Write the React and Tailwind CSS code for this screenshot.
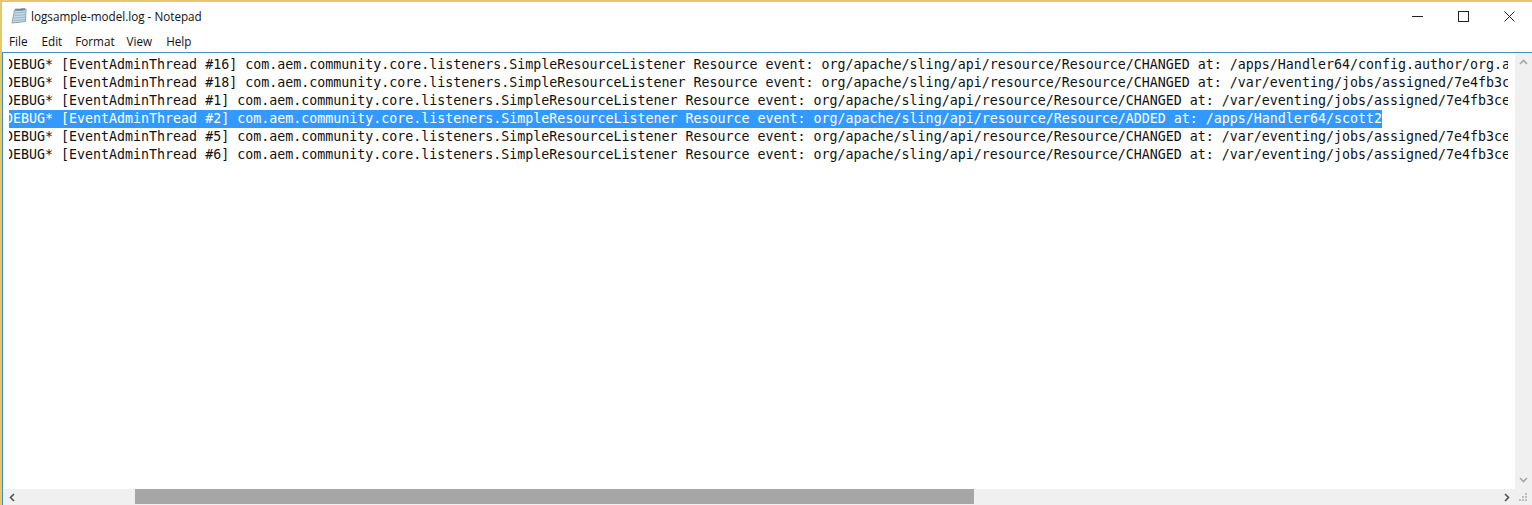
const prefix = "com.aem.community.core.listeners.SimpleResourceListener Resource event: org/apache/sling/api/resource/Resource/";

const lines = [
  { thread: "#16", rest: "CHANGED at: /apps/Handler64/config.author/org.apache.sling.commons.log" },
  { thread: "#18", rest: "CHANGED at: /var/eventing/jobs/assigned/7e4fb3ce-8c1f-4a3e" },
  { thread: "#1", rest: "CHANGED at: /var/eventing/jobs/assigned/7e4fb3ce-8c1f-4a3e" },
  { thread: "#2", rest: "ADDED at: /apps/Handler64/scott2", selected: true },
  { thread: "#5", rest: "CHANGED at: /var/eventing/jobs/assigned/7e4fb3ce-8c1f-4a3e" },
  { thread: "#6", rest: "CHANGED at: /var/eventing/jobs/assigned/7e4fb3ce-8c1f-4a3e" },
];

const NotepadIcon = () => (
  <svg width="16" height="16" viewBox="0 0 16 16" className="shrink-0">
    <path d="M3.5 2 L15 1 L14.5 13.5 L1 15 Z" fill="#c4dcea" stroke="#8aa3b3" />
    <path d="M4 5 L14 4.2 M3.5 7.5 L14 6.7 M3 10 L14 9.2 M2.5 12.5 L14 11.7" stroke="#9db4c2" />
    <path d="M5 0.5 V3 M7 0.5 V3 M9 0.5 V3 M11 0 V3 M13 0 V2.5" stroke="#4f5f68" />
  </svg>
);

const App = () => {
  return (
    <div className="h-[505px] w-[1532px] flex flex-col overflow-hidden bg-white border-t-2 border-l-2 border-[#e6c868] font-['Segoe_UI','Open_Sans',sans-serif] text-black">
      {/* Title bar */}
      <div className="h-[28px] flex items-center shrink-0 pl-[9px]">
        <NotepadIcon />
        <span className="ml-[4px] mt-[2px] text-[11.7px] leading-none text-[#111]">logsample-model.log - Notepad</span>
        <div className="ml-auto flex items-center text-[#222]">
          <div className="w-[46px] flex justify-center">
            <svg width="11" height="11" viewBox="0 0 11 11"><path d="M0 5.5H11" stroke="#222" /></svg>
          </div>
          <div className="w-[46px] flex justify-center">
            <svg width="11" height="11" viewBox="0 0 11 11"><rect x="0.5" y="0.5" width="10" height="10" fill="none" stroke="#222" /></svg>
          </div>
          <div className="w-[46px] flex justify-center">
            <svg width="11" height="11" viewBox="0 0 11 11"><path d="M0.5 0.5L10.5 10.5M10.5 0.5L0.5 10.5" stroke="#222" /></svg>
          </div>
        </div>
      </div>

      {/* Menu bar */}
      <div className="h-[22px] flex items-center shrink-0 pl-[7px] pt-[2px] text-[11.7px] text-[#111]">
        <span>File</span>
        <span className="ml-[14px]">Edit</span>
        <span className="ml-[13px]">Format</span>
        <span className="ml-[12px]">View</span>
        <span className="ml-[14px]">Help</span>
      </div>

      {/* Editor */}
      <div className="flex-1 min-h-0 flex flex-col border-t border-[#3f8fc4] border-l border-l-[#3f8fc4]">
        <div className="flex-1 min-h-0 flex">
          <div className="flex-1 min-w-0 overflow-hidden pt-[3px] pl-[6px] pr-[7px]">
            <div className="overflow-hidden">
              {lines.map((line) => (
                <div key={line.thread} className="h-[18px] leading-[18px] whitespace-pre font-['DejaVu_Sans_Mono',monospace] text-[13.3px] -ml-[4px]">
                  <span className={line.selected ? "bg-[#3399ff] text-white inline-block h-[18px]" : "text-[#111]"}>
                    {`DEBUG* [EventAdminThread ${line.thread}] ${prefix}${line.rest}`}
                  </span>
                </div>
              ))}
            </div>
          </div>
          {/* Vertical scrollbar */}
          <div className="w-[17px] shrink-0 bg-[#f0f0f0] flex flex-col items-center justify-between py-[6px]">
            <svg width="9" height="6" viewBox="0 0 9 6"><path d="M1 5L4.5 1.5L8 5" fill="none" stroke="#a6a6a6" strokeWidth="1.6" /></svg>
            <svg width="9" height="6" viewBox="0 0 9 6"><path d="M1 1L4.5 4.5L8 1" fill="none" stroke="#a6a6a6" strokeWidth="1.6" /></svg>
          </div>
        </div>
        {/* Horizontal scrollbar */}
        <div className="h-[16px] shrink-0 bg-[#f0f0f0] flex items-center">
          <div className="w-[17px] flex justify-center shrink-0">
            <svg width="6" height="9" viewBox="0 0 6 9"><path d="M5 1L1.5 4.5L5 8" fill="none" stroke="#505050" strokeWidth="1.6" /></svg>
          </div>
          <div className="ml-[115px] w-[839px] h-[15px] self-start bg-[#a6a6a6]" />
          <div className="ml-auto w-[17px] flex justify-center">
            <svg width="6" height="9" viewBox="0 0 6 9"><path d="M1 1L4.5 4.5L1 8" fill="none" stroke="#505050" strokeWidth="1.6" /></svg>
          </div>
          {/* Size grip */}
          <div className="w-[17px] shrink-0 flex justify-center">
            <svg width="9" height="9" viewBox="0 0 9 9" fill="#bdbdbd">
              <rect x="6" y="0" width="2" height="2" />
              <rect x="3" y="3" width="2" height="2" />
              <rect x="6" y="3" width="2" height="2" />
              <rect x="0" y="6" width="2" height="2" />
              <rect x="3" y="6" width="2" height="2" />
              <rect x="6" y="6" width="2" height="2" />
            </svg>
          </div>
        </div>
      </div>
    </div>
  );
};

export default App;
